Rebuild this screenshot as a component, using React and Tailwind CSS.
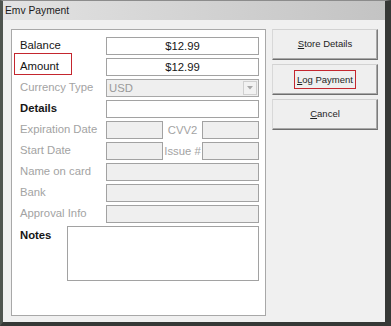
const font = { fontFamily: '"Liberation Sans", Arial, sans-serif' }

const Row = ({ label, tone = 'gray', bold, children, mark }) => (
  <div className="flex h-[18px] items-center">
    <div
      className={`relative w-[86px] shrink-0 text-[11.3px] leading-none ${
        tone === 'gray' ? 'text-[#a3a3a3]' : 'text-[#151515]'
      } ${bold ? 'font-bold' : ''}`}
    >
      {label}
      {mark && <span className="absolute left-[-6px] top-[-8px] h-[22px] w-[58px] border border-[#c4262e]" />}
    </div>
    <div className="flex h-full flex-1">{children}</div>
  </div>
)

const Field = ({ value, disabled, center, className = '' }) => (
  <div
    className={`flex h-full items-center border border-[#a2a2a2] text-[11.3px] ${
      disabled ? 'bg-[#efefef] text-[#9a9a9a]' : 'bg-white text-[#151515]'
    } ${center ? 'justify-center' : 'pl-[2px]'} ${className}`}
  >
    {value}
  </div>
)

const Button = ({ children }) => (
  <div className="flex h-[31px] items-center justify-center border border-t-[#d2d2d2] border-l-[#d8d8d8] border-r-[#7c7c7c] border-b-[#6e6e6e] bg-[#efefef] text-[9.5px] text-[#1e1e1e] shadow-[inset_-1px_-1px_0_#a8a8a8]">
    {children}
  </div>
)

export default function App() {
  return (
    <div
      className="flex h-[326px] w-[391px] flex-col border-t border-l-[3px] border-r-[6px] border-b-[4px] border-t-[#8c8c8c] border-l-[#4f554f] border-r-[#363836] border-b-[#363836] bg-[#f0f0f0]"
      style={font}
    >
      <div className="flex h-[19px] shrink-0 items-center bg-gradient-to-r from-[#e3e3e3] to-[#c3c3c3] pl-[2px] text-[10.3px] text-[#1a1a1a]">
        Emv Payment
      </div>

      <div className="flex flex-1 gap-[6px] pl-[8px] pr-[7px] pt-[9px] pb-[6px]">
        <div className="flex w-[255px] flex-col gap-[3px] border border-[#a8a8a8] bg-white pl-[8px] pr-[6px] pt-[7px]">
          <Row label="Balance" tone="dark">
            <Field value="$12.99" center className="flex-1" />
          </Row>
          <Row label="Amount" tone="dark" mark>
            <Field value="$12.99" center className="flex-1" />
          </Row>
          <Row label="Currency Type">
            <div className="flex h-full flex-1 items-center border border-[#a8a8a8] bg-[#efefef] pl-[2px] text-[11.3px] text-[#9a9a9a]">
              <span className="flex-1">USD</span>
              <span className="mr-[1px] flex h-[14px] w-[14px] items-center justify-center border border-[#d0d0d0] bg-[#f2f2f2]">
                <svg width="6" height="4" viewBox="0 0 6 4">
                  <path d="M0 0h6L3 3.5z" fill="#a8a8a8" />
                </svg>
              </span>
            </div>
          </Row>
          <Row label="Details" tone="dark" bold>
            <Field value="" className="flex-1" />
          </Row>
          <Row label="Expiration Date">
            <Field value="" disabled className="w-[57px]" />
            <span className="flex w-[39px] items-center justify-center text-[11.3px] text-[#a3a3a3]">CVV2</span>
            <Field value="" disabled className="flex-1" />
          </Row>
          <Row label="Start Date">
            <Field value="" disabled className="w-[57px]" />
            <span className="flex w-[39px] items-center justify-center text-[11.3px] text-[#a3a3a3]">Issue #</span>
            <Field value="" disabled className="flex-1" />
          </Row>
          <Row label="Name on card">
            <Field value="" disabled className="flex-1" />
          </Row>
          <Row label="Bank">
            <Field value="" disabled className="flex-1" />
          </Row>
          <Row label="Approval Info">
            <Field value="" disabled className="flex-1" />
          </Row>
          <div className="flex">
            <div className="w-[47px] pt-[4px] text-[11.3px] font-bold leading-none text-[#151515]">Notes</div>
            <div className="h-[55px] flex-1 border border-[#a2a2a2] bg-white" />
          </div>
        </div>

        <div className="flex w-[106px] flex-col gap-[4px]">
          <Button>
            <span><span className="underline">S</span>tore Details</span>
          </Button>
          <Button>
            <span className="border border-[#c4262e] px-[2px] py-[2px] leading-[13px]">
              <span className="underline">L</span>og Payment
            </span>
          </Button>
          <Button>
            <span><span className="underline">C</span>ancel</span>
          </Button>
        </div>
      </div>
    </div>
  )
}
